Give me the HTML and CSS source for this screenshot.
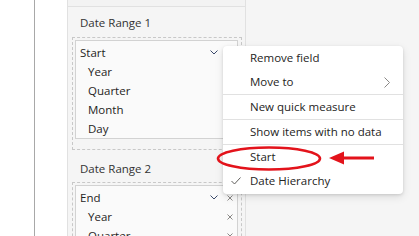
FILE: index.html
```html
<!DOCTYPE html>
<html>
<head>
<meta charset="utf-8">
<link rel="stylesheet" href="styles.css">
</head>
<body>
<div class="app">
  <div class="rail"></div>
  <div class="gutter"></div>
  <div class="panel">
    <div class="panel-top"></div>
    <div class="panel-body">
      <div class="well-title first">Date Range 1</div>
      <div class="drop">
        <div class="field">
          <div class="row">
            <span class="label">Start</span>
            <svg class="chev" width="8" height="5" viewBox="0 0 8 5"><polyline points="0.5,0.5 4,4 7.5,0.5" fill="none" stroke="#3b4a6b" stroke-width="1"/></svg>
            <svg class="x" width="6" height="6" viewBox="0 0 6 6"><path d="M0.5 0.5L5.5 5.5M5.5 0.5L0.5 5.5" stroke="#8a8886" stroke-width="1"/></svg>
          </div>
          <div class="row sub"><span class="label">Year</span></div>
          <div class="row sub"><span class="label">Quarter</span></div>
          <div class="row sub"><span class="label">Month</span></div>
          <div class="row sub"><span class="label">Day</span></div>
        </div>
      </div>
      <div class="well-title">Date Range 2</div>
      <div class="drop">
        <div class="field">
          <div class="row">
            <span class="label">End</span>
            <svg class="chev" width="8" height="5" viewBox="0 0 8 5"><polyline points="0.5,0.5 4,4 7.5,0.5" fill="none" stroke="#3b4a6b" stroke-width="1"/></svg>
            <svg class="x" width="6" height="6" viewBox="0 0 6 6"><path d="M0.5 0.5L5.5 5.5M5.5 0.5L0.5 5.5" stroke="#8a8886" stroke-width="1"/></svg>
          </div>
          <div class="row sub"><span class="label">Year</span><svg class="x" width="6" height="6" viewBox="0 0 6 6"><path d="M0.5 0.5L5.5 5.5M5.5 0.5L0.5 5.5" stroke="#8a8886" stroke-width="1"/></svg></div>
          <div class="row sub"><span class="label">Quarter</span><svg class="x" width="6" height="6" viewBox="0 0 6 6"><path d="M0.5 0.5L5.5 5.5M5.5 0.5L0.5 5.5" stroke="#8a8886" stroke-width="1"/></svg></div>
        </div>
      </div>
    </div>
  </div>
  <div class="canvas"></div>
</div>

<div class="menu">
  <div class="item">Remove field</div>
  <div class="item">Move to
    <svg class="more" width="6" height="11" viewBox="0 0 6 11"><polyline points="0.5,0.5 5.5,5.5 0.5,10.5" fill="none" stroke="#8a8886" stroke-width="1"/></svg>
  </div>
  <div class="sep"></div>
  <div class="item">New quick measure</div>
  <div class="sep"></div>
  <div class="item">Show items with no data</div>
  <div class="sep"></div>
  <div class="item">Start</div>
  <div class="item">
    <svg class="check" width="10" height="8" viewBox="0 0 10 8"><polyline points="0.5,4 3.5,7 9.5,0.5" fill="none" stroke="#605e5c" stroke-width="1"/></svg>
    Date Hierarchy
  </div>
</div>

<svg class="annot" width="419" height="236" viewBox="0 0 419 236">
  <ellipse cx="269" cy="158.5" rx="51" ry="11" fill="none" stroke="#e3131b" stroke-width="2.6"/>
  <rect x="342" y="156.5" width="32" height="3" fill="#e3131b"/>
  <polygon points="329,158 344,151.5 344,164.5" fill="#e3131b"/>
</svg>
</body>
</html>
```

FILE: styles.css
```css
html, body {
  margin: 0;
  padding: 0;
}
body {
  width: 419px;
  height: 236px;
  overflow: hidden;
  position: relative;
  font-family: "Segoe UI", "Open Sans", "Noto Sans", sans-serif;
  font-size: 11.5px;
  color: #252423;
  background: #f5f5f5;
}
.app {
  display: flex;
  height: 236px;
  overflow: hidden;
}
.rail {
  width: 34px;
  background: #ffffff;
  border-right: 1px solid #a8a8a8;
}
.gutter {
  width: 32px;
  background: #ffffff;
  border-right: 1px solid #e1e1e1;
}
.panel {
  width: 177px;
  background: #f5f5f5;
  border-right: 1px solid #e1e1e1;
}
.panel-top {
  height: 6px;
  background: #f3f3f3;
  border-bottom: 1px solid #e1e1e1;
}
.panel-body {
  padding: 0 0 0 4px;
  display: flow-root;
}
.canvas {
  flex: 1;
  background: #f5f5f5;
}
.well-title {
  line-height: 16px;
  padding-left: 8px;
  margin: 11px 0 5px;
  color: #333333;
}
.well-title.first {
  margin-top: 8px;
  margin-bottom: 6px;
}
.drop {
  width: 163px;
  border: 1px dashed #c8c8c8;
  padding: 2px 3px 10px 2px;
}
.field {
  background: #fafafa;
  border: 1px solid #d2d2d2;
  padding: 2px 3px 0 4px;
}
.row {
  display: flex;
  align-items: center;
  height: 19px;
}
.row .label {
  flex: 1;
}
.row.sub .label {
  padding-left: 8px;
}
.chev {
  margin-right: 9px;
}
.x {
  margin-right: 1px;
}
.menu {
  position: absolute;
  left: 223px;
  top: 46px;
  width: 180px;
  padding-bottom: 1px;
  background: #ffffff;
  border-radius: 4px;
  box-shadow: 0 1px 3px rgba(0,0,0,0.12), 0 3px 9px rgba(0,0,0,0.10);
}
.item {
  position: relative;
  height: 24px;
  line-height: 24px;
  padding-left: 27px;
  color: #252423;
}
.sep {
  height: 1px;
  background: #e1e1e1;
}
.more {
  position: absolute;
  right: 13px;
  top: 7px;
}
.check {
  position: absolute;
  left: 8px;
  top: 8px;
}
.annot {
  position: absolute;
  left: 0;
  top: 0;
  pointer-events: none;
}
```
